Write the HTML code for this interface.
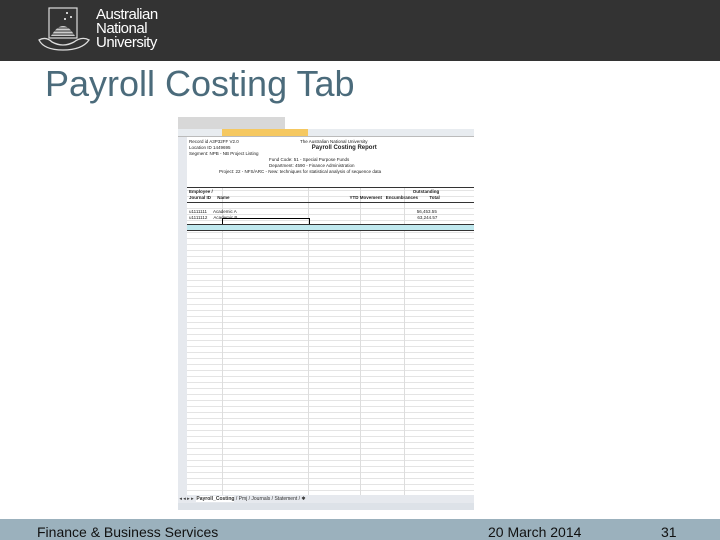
<!DOCTYPE html><html><head><style>
body{margin:0;width:720px;height:540px;position:relative;background:#fff;font-family:"Liberation Sans",sans-serif;overflow:hidden}
.hdr{position:absolute;left:0;top:0;width:720px;height:61px;background:#333}
.t{position:absolute;color:#fff;font-size:15px;line-height:14px;left:96px;top:8px;letter-spacing:-0.5px}
h1{position:absolute;left:45px;top:63px;margin:0;font-weight:normal;font-size:36px;color:#4b6b7b}
.ft{position:absolute;left:0;top:519px;width:720px;height:21px;background:#9bb1bd;font-size:14px;color:#111}
.ss{position:absolute;left:178px;top:117px;width:296px;height:393px;background:#fff;font-size:4.5px;overflow:hidden}
.a{position:absolute}
</style></head><body>
<div class="hdr">
<svg class="a" style="left:36px;top:6px" width="56" height="46" viewBox="0 0 56 46"><rect x="13" y="2" width="28" height="30" fill="none" stroke="#ddd" stroke-width="1.2"/><path d="M15 30 Q27 10 39 30Z" fill="#ccc"/><path d="M16 22h22M16 25h22M16 28h22" stroke="#333" stroke-width="1"/><path d="M3 34 Q10 30 16 36 Q27 42 38 36 Q46 30 53 34 Q46 44 27 44 Q8 44 3 34Z" fill="none" stroke="#ddd" stroke-width="1.3"/><circle cx="31" cy="7" r="1" fill="#fff"/><circle cx="35" cy="11" r="1" fill="#fff"/><circle cx="29" cy="13" r="1" fill="#fff"/></svg>
<div class="t">Australian<br>National<br>University</div>
</div>
<h1>Payroll Costing Tab</h1>
<div class="ss">
<div class="a" style="left:0;top:0;width:107px;height:12px;background:#d8d8d8"></div>
<div class="a" style="left:0;top:12px;width:296px;height:7px;background:#e8ecf0;border-bottom:1px solid #bbb"></div>
<div class="a" style="left:44px;top:12px;width:86px;height:7px;background:#f5c861"></div>
<div class="a" style="left:0;top:20px;width:9px;height:358px;background:#e6e9ee"></div>
<div class="a" style="left:9px;top:20px;width:287px;height:358px;background:repeating-linear-gradient(#fff 0 5px,#e4e4e4 5px 6px)"></div>
<div class="a" style="left:44px;top:70px;width:1px;height:308px;background:#ddd"></div>
<div class="a" style="left:130px;top:70px;width:1px;height:308px;background:#ddd"></div>
<div class="a" style="left:182px;top:70px;width:1px;height:308px;background:#ddd"></div>
<div class="a" style="left:226px;top:70px;width:1px;height:308px;background:#ddd"></div>
<div class="a" style="left:9px;top:20px;width:287px;height:50px;background:#fff;border-bottom:1px solid #333"></div>
<div class="a" style="left:11px;top:22px;line-height:6px;color:#222;width:285px;white-space:nowrap">Record id A3P32FF V2.0 <span style="margin-left:60px">The Australian National University</span><br>Location ID 1449695 <b style="font-size:6px;margin-left:80px">Payroll Costing Report</b><br>Segment: NPB - NB Project Listing<br><span style="margin-left:80px">Fund Code: 51 - Special Purpose Funds</span><br><span style="margin-left:80px">Department: 4590 - Finance Administration</span><br><span style="margin-left:30px">Project: 22 - NFS/ARC - New: techniques for statistical analysis of sequence data</span></div>
<div class="a" style="left:11px;top:72px;line-height:6px;color:#222;width:285px;white-space:nowrap"><b>Employee /</b><span style="margin-left:200px"><b>Outstanding</b></span><br><b>Journal ID</b> &nbsp; &nbsp; <b>Name</b><span style="margin-left:120px"><b>YTD Movement &nbsp; Encumbrances &nbsp; &nbsp; &nbsp; &nbsp; Total</b></span></div>
<div class="a" style="left:9px;top:85px;width:287px;height:1px;background:#333"></div>
<div class="a" style="left:11px;top:92px;color:#222;line-height:6px;white-space:nowrap">u1111111 &nbsp; &nbsp; Academic A<span style="margin-left:180px">56,453.55</span><br>u1111112 &nbsp; &nbsp; Academic B<span style="margin-left:180px">63,244.57</span></div>
<div class="a" style="left:44px;top:101px;width:86px;height:6px;border:1px solid #000"></div>
<div class="a" style="left:9px;top:107px;width:287px;height:5px;background:#bfe8ee;border-top:1px solid #333;border-bottom:1px solid #333"></div>
<div class="a" style="left:0;top:378px;width:296px;height:8px;background:#e6e9ee;color:#333;font-size:5px;line-height:8px">&nbsp;◂ ◂ ▸ ▸ &nbsp;<b style="background:#fff">Payroll_Costing</b> / Pmj / Journals / Statement / ✱</div>
<div class="a" style="left:0;top:386px;width:296px;height:7px;background:#dde2e8"></div>
</div>
<div class="ft"><span class="a" style="left:37px;top:5px">Finance &amp; Business Services</span><span class="a" style="left:488px;top:5px">20 March 2014</span><span class="a" style="left:661px;top:5px">31</span></div>
</body></html>
